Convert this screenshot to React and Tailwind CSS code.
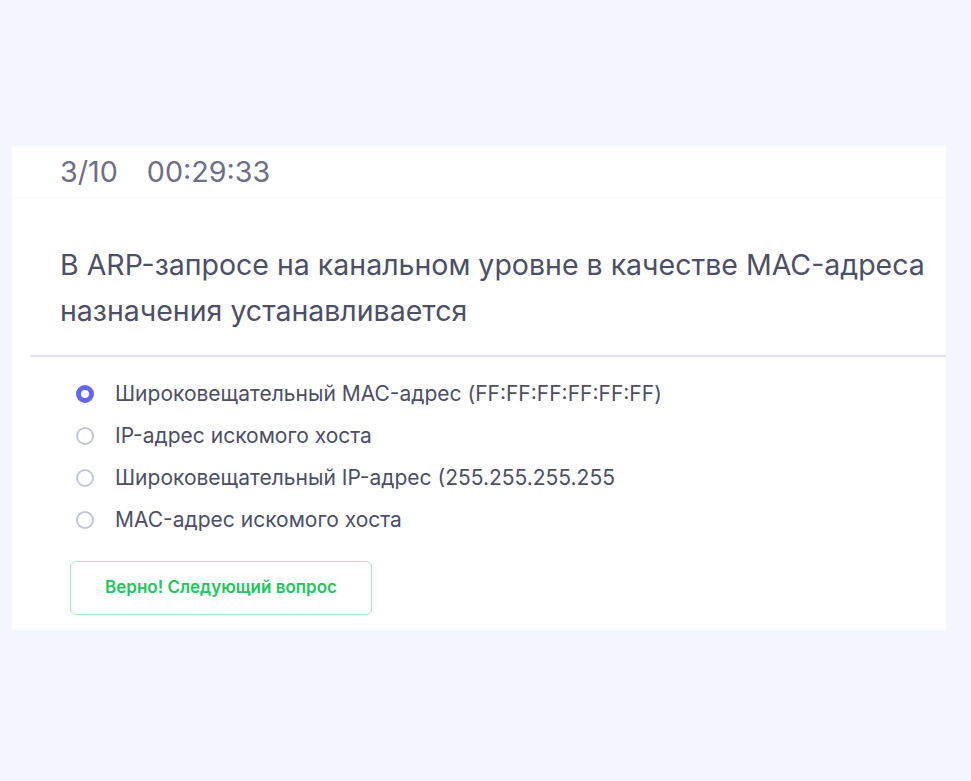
import React, { useState } from "react";

const options = [
  "Широковещательный MAC-адрес (FF:FF:FF:FF:FF:FF)",
  "IP-адрес искомого хоста",
  "Широковещательный IP-адрес (255.255.255.255",
  "MAC-адрес искомого хоста",
];

const Radio = ({ checked }) => (
  <span
    className={
      checked
        ? "w-[18px] h-[18px] rounded-full border-[5px] border-[#6366f1] bg-white shrink-0"
        : "w-[18px] h-[18px] rounded-full border-2 border-[#c4c6d4] bg-white shrink-0"
    }
  />
);

export default function App() {
  const [selected, setSelected] = useState(0);

  return (
    <div className="min-h-[781px] bg-[#f3f6fe] pt-[146px] font-['Inter',sans-serif]">
      <div className="ml-[12px] w-[934px] bg-white pb-[15px]">
        <div className="h-[53px] flex items-center gap-[29px] pl-[48px] border-b border-[#f8f9fc] text-[28.7px] text-[#6e6e85]">
          <span>3/10</span>
          <span>00:29:33</span>
        </div>
        <div className="pl-[48px] pr-[8px] pt-[43px] pb-[21px] text-[28.5px] leading-[46px] text-[#4c4f66]">
          В ARP-запросе на канальном уровне в качестве MAC-адреса назначения устанавливается
        </div>
        <div className="ml-[18px] h-[2px] bg-[#e1e3f1]" />
        <div className="pl-[64px] pt-[16px] flex flex-col">
          {options.map((o, i) => (
            <label
              key={i}
              onClick={() => setSelected(i)}
              className="h-[42px] flex items-center gap-[21px] text-[21px] text-[#4c4f66] cursor-pointer"
            >
              <Radio checked={selected === i} />
              <span>{o}</span>
            </label>
          ))}
        </div>
        <div className="pl-[58px] pt-[20px]">
          <button className="w-[302px] h-[54px] rounded-[6px] border border-[#a8ecc4] bg-white text-[17px] font-semibold text-[#22c55e]">
            Верно! Следующий вопрос
          </button>
        </div>
      </div>
    </div>
  );
}
